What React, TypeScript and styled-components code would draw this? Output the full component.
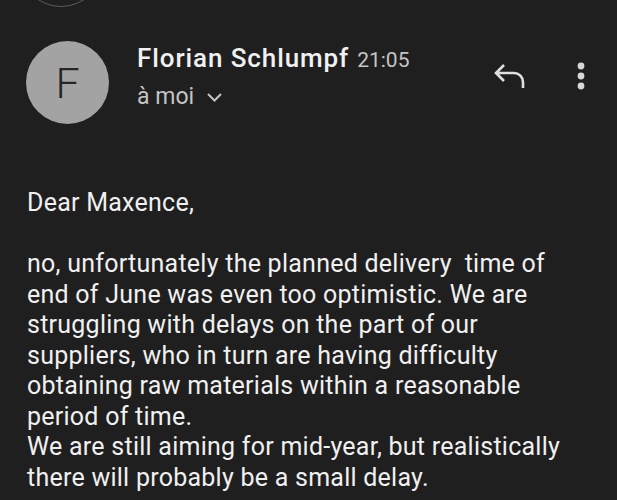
import React from 'react'
import styled, { createGlobalStyle } from 'styled-components'

const GlobalStyle = createGlobalStyle`
  html, body {
    margin: 0;
    padding: 0;
    background: #1f1f1f;
  }
  body {
    font-family: Roboto, "Noto Sans", "Liberation Sans", sans-serif;
    color: #ececec;
  }
`

const Screen = styled.div`
  width: 617px;
  height: 500px;
  overflow: hidden;
  background: #1f1f1f;
`

const PrevStrip = styled.div`
  height: 8px;
  overflow: hidden;
  padding-left: 19px;
`

const PrevRing = styled.div`
  width: 84px;
  height: 84px;
  margin-top: -77px;
  border-radius: 50%;
  border: 1.5px solid #5c5c5c;
  box-sizing: border-box;
`

const Header = styled.div`
  display: flex;
  align-items: flex-start;
  padding: 33px 0 0 26px;
`

const Avatar = styled.div`
  width: 83px;
  height: 83px;
  border-radius: 50%;
  background: #a3a3a3;
  color: #262626;
  display: flex;
  align-items: center;
  justify-content: center;
  font-size: 43px;
  font-weight: 300;
  flex-shrink: 0;
`

const Meta = styled.div`
  display: flex;
  flex-direction: column;
  margin-left: 28px;
  flex: 1;
`

const NameRow = styled.div`
  display: flex;
  align-items: baseline;
  height: 36px;
  margin-top: 2px;
`

const Name = styled.span`
  font-size: 26px;
  font-weight: 500;
  letter-spacing: 0.9px;
  color: #f1f1f1;
`

const Time = styled.span`
  font-size: 21px;
  color: #c4c4c4;
  margin-left: 8px;
`

const ToRow = styled.div`
  display: flex;
  align-items: center;
  margin-top: 4px;
  font-size: 23px;
  color: #c4c4c4;
`

const Chevron = styled.svg`
  margin-left: 12px;
  margin-top: 1px;
`

const Actions = styled.div`
  display: flex;
  align-items: center;
  gap: 50px;
  padding: 21px 32px 0 0;
`

const Body = styled.div`
  padding: 64px 20px 0 27px;
  font-size: 25px;
  letter-spacing: 0.25px;
  line-height: 30.5px;
  color: #f0f0f0;
  white-space: pre-wrap;
`

const Para = styled.p`
  margin: 0 0 30.5px;
`

const lines = [
  'no, unfortunately the planned delivery  time of',
  'end of June was even too optimistic. We are',
  'struggling with delays on the part of our',
  'suppliers, who in turn are having difficulty',
  'obtaining raw materials within a reasonable',
  'period of time.',
  'We are still aiming for mid-year, but realistically',
  'there will probably be a small delay.',
]

const App = () => {
  return (
    <Screen>
      <GlobalStyle />
      <PrevStrip>
        <PrevRing />
      </PrevStrip>
      <Header>
        <Avatar>F</Avatar>
        <Meta>
          <NameRow>
            <Name>Florian Schlumpf</Name>
            <Time>21:05</Time>
          </NameRow>
          <ToRow>
            à moi
            <Chevron width='17' height='11' viewBox='0 0 17 11'>
              <path d='M2 2l6.5 6.5 6.5-6.5' fill='none' stroke='#c4c4c4' strokeWidth='2' />
            </Chevron>
          </ToRow>
        </Meta>
        <Actions>
          <svg width='34' height='28' viewBox='0 0 34 28'>
            <path
              d='M11 3L3 11l8 8M3 11h18a9 9 0 0 1 9 9v6'
              fill='none'
              stroke='#e0e0e0'
              strokeWidth='2.6'
              strokeLinejoin='miter'
            />
          </svg>
          <svg width='8' height='28' viewBox='0 0 8 28'>
            <circle cx='4' cy='4' r='3.4' fill='#d6d6d6' />
            <circle cx='4' cy='14' r='3.4' fill='#d6d6d6' />
            <circle cx='4' cy='24' r='3.4' fill='#d6d6d6' />
          </svg>
        </Actions>
      </Header>
      <Body>
        <Para>Dear Maxence,</Para>
        <Para>
          {lines.map((l, i) => (
            <React.Fragment key={i}>
              {l}
              {i < lines.length - 1 && <br />}
            </React.Fragment>
          ))}
        </Para>
      </Body>
    </Screen>
  )
}

export default App
